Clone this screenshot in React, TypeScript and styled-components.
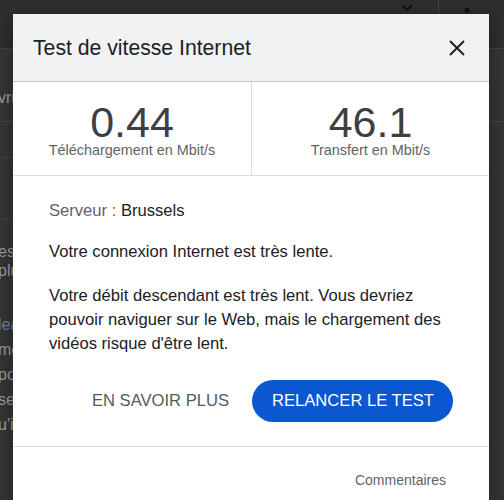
import React from 'react';
import styled, { createGlobalStyle } from 'styled-components';

const GlobalStyle = createGlobalStyle`
  html, body {
    margin: 0;
    padding: 0;
    background: #333333;
  }
  body {
    font-family: "Liberation Sans", Arial, sans-serif;
  }
`;

const bgLinesTop = ['vrir le menu'];
const bgLinesMid = ['es.', 'plus'];
const bgLinesLow = [
  { text: 'learn more', link: true },
  { text: 'me' },
  { text: 'pour' },
  { text: 'se' },
  { text: "u'il" },
];

export default function App() {
  return (
    <>
      <GlobalStyle />
      <Page>
        <TopBar>
          <BarIcon $top={-5}>
            <svg width="24" height="24" viewBox="0 0 24 24">
              <path d="M7 10l5 5 5-5" fill="none" stroke="#111" strokeWidth="2" />
            </svg>
          </BarIcon>
          <BarDivider />
          <BarIcon $top={5}>
            <svg width="24" height="24" viewBox="0 0 24 24" fill="#111">
              <circle cx="12" cy="5.5" r="2.5" />
              <circle cx="12" cy="12" r="2.5" />
              <circle cx="12" cy="18.5" r="2.5" />
            </svg>
          </BarIcon>
        </TopBar>
        <BgRow $height={72}>
          <BgText $top={40}>{bgLinesTop[0]}</BgText>
        </BgRow>
        <BgRow $height={35} $side />
        <BgRow $height={61} $side />
        <BgBlock $top={22} $lh={19}>
          {bgLinesMid.map((t) => (
            <BgText key={t}>{t}</BgText>
          ))}
        </BgBlock>
        <BgBlock $top={32} $lh={25}>
          {bgLinesLow.map((l) => (
            <BgText key={l.text} $link={l.link}>
              {l.text}
            </BgText>
          ))}
        </BgBlock>

        <Dialog>
          <Header>
            <Title>Test de vitesse Internet</Title>
            <CloseButton aria-label="Fermer">
              <svg width="16" height="16" viewBox="0 0 16 16">
                <path d="M1 1L15 15M15 1L1 15" stroke="#202124" strokeWidth="2" />
              </svg>
            </CloseButton>
          </Header>

          <Stats>
            <StatCell>
              <StatValue>0.44</StatValue>
              <StatLabel>Téléchargement en Mbit/s</StatLabel>
            </StatCell>
            <StatCell $divided>
              <StatValue>46.1</StatValue>
              <StatLabel>Transfert en Mbit/s</StatLabel>
            </StatCell>
          </Stats>

          <Body>
            <ServerLine>
              <Muted>Serveur : </Muted>Brussels
            </ServerLine>
            <Status>Votre connexion Internet est très lente.</Status>
            <Details>
              Votre débit descendant est très lent. Vous devriez pouvoir naviguer sur le Web, mais
              le chargement des vidéos risque d'être lent.
            </Details>
            <Actions>
              <TextButton>EN SAVOIR PLUS</TextButton>
              <PrimaryButton>RELANCER LE TEST</PrimaryButton>
            </Actions>
          </Body>

          <Footer>
            <FooterButton>Commentaires</FooterButton>
          </Footer>
        </Dialog>
      </Page>
    </>
  );
}

const Page = styled.div`
  position: relative;
  width: 504px;
  height: 500px;
  overflow: hidden;
  background: #343434;
`;

const TopBar = styled.div`
  height: 48px;
  display: flex;
  justify-content: flex-end;
  align-items: flex-start;
  padding-right: 25px;
  background: #2e2e2e;
  border-bottom: 1px solid #424242;
`;

const BarIcon = styled.div<{ $top: number }>`
  width: 24px;
  height: 24px;
  margin-top: ${(p) => p.$top}px;
  display: flex;
`;

const BarDivider = styled.div`
  width: 1px;
  height: 48px;
  background: #444;
  margin: 0 16px 0 19px;
`;

const BgRow = styled.div<{ $height: number; $side?: boolean }>`
  height: ${(p) => p.$height}px;
  width: ${(p) => (p.$side ? '240px' : '100%')};
  border-bottom: 1px solid #424242;
  overflow: hidden;
`;

const BgBlock = styled.div<{ $top: number; $lh: number }>`
  margin-top: ${(p) => p.$top}px;
  line-height: ${(p) => p.$lh}px;
  display: flex;
  flex-direction: column;
`;

const BgText = styled.div<{ $top?: number; $link?: boolean }>`
  margin: ${(p) => p.$top ?? 0}px 0 0 -2px;
  font-size: 16px;
  line-height: inherit;
  color: ${(p) => (p.$link ? '#6f7fa0' : '#9a9a9a')};
  white-space: nowrap;
`;

const Dialog = styled.div`
  position: absolute;
  top: 14px;
  left: 13px;
  width: 476px;
  background: #ffffff;
  box-shadow: 0 4px 16px rgba(0, 0, 0, 0.35);
  color: #202124;
`;

const Header = styled.div`
  height: 67px;
  display: flex;
  align-items: center;
  justify-content: space-between;
  padding: 0 24px 0 20px;
  background: #f1f2f3;
  border-bottom: 1px solid #c8c8c8;
`;

const Title = styled.h1`
  margin: 0;
  font-size: 21.2px;
  font-weight: 400;
  line-height: 24px;
  color: #202124;
`;

const CloseButton = styled.button`
  width: 16px;
  height: 16px;
  padding: 0;
  border: none;
  background: transparent;
  display: flex;
  cursor: pointer;
`;

const Stats = styled.div`
  display: grid;
  grid-template-columns: 1fr 1fr;
  border-bottom: 1px solid #dcdcdc;
`;

const StatCell = styled.div<{ $divided?: boolean }>`
  display: flex;
  flex-direction: column;
  align-items: center;
  padding: 20px 0 17px;
  border-left: ${(p) => (p.$divided ? '1px solid #dcdcdc' : 'none')};
`;

const StatValue = styled.div`
  font-size: 43px;
  line-height: 40px;
  color: #3c4043;
`;

const StatLabel = styled.div`
  font-size: 14.4px;
  line-height: 16px;
  color: #5f6368;
`;

const Body = styled.div`
  padding: 23px 36px 24px;
  border-bottom: 1px solid #dadce0;
  font-size: 16.6px;
  line-height: 24px;
`;

const ServerLine = styled.div`
  color: #202124;
`;

const Muted = styled.span`
  color: #5f6368;
`;

const Status = styled.p`
  margin: 17px 0 0;
`;

const Details = styled.p`
  margin: 20px 0 0;
`;

const Actions = styled.div`
  margin-top: 24px;
  display: flex;
  justify-content: flex-end;
  align-items: center;
  gap: 7px;
`;

const TextButton = styled.button`
  height: 42px;
  padding: 0 16px;
  border: none;
  background: transparent;
  font-family: inherit;
  font-size: 16.6px;
  color: #555a60;
  cursor: pointer;
`;

const PrimaryButton = styled.button`
  height: 42px;
  padding: 0 19px 0 20px;
  border: none;
  border-radius: 21px;
  background: #0b57d0;
  font-family: inherit;
  font-size: 16.6px;
  color: #ffffff;
  cursor: pointer;
`;

const Footer = styled.div`
  display: flex;
  justify-content: flex-end;
  padding: 23px 27px 20px;
`;

const FooterButton = styled.button`
  padding: 0 16px;
  border: none;
  background: transparent;
  font-family: inherit;
  font-size: 14px;
  line-height: 20px;
  color: #5f6368;
  cursor: pointer;
`;
